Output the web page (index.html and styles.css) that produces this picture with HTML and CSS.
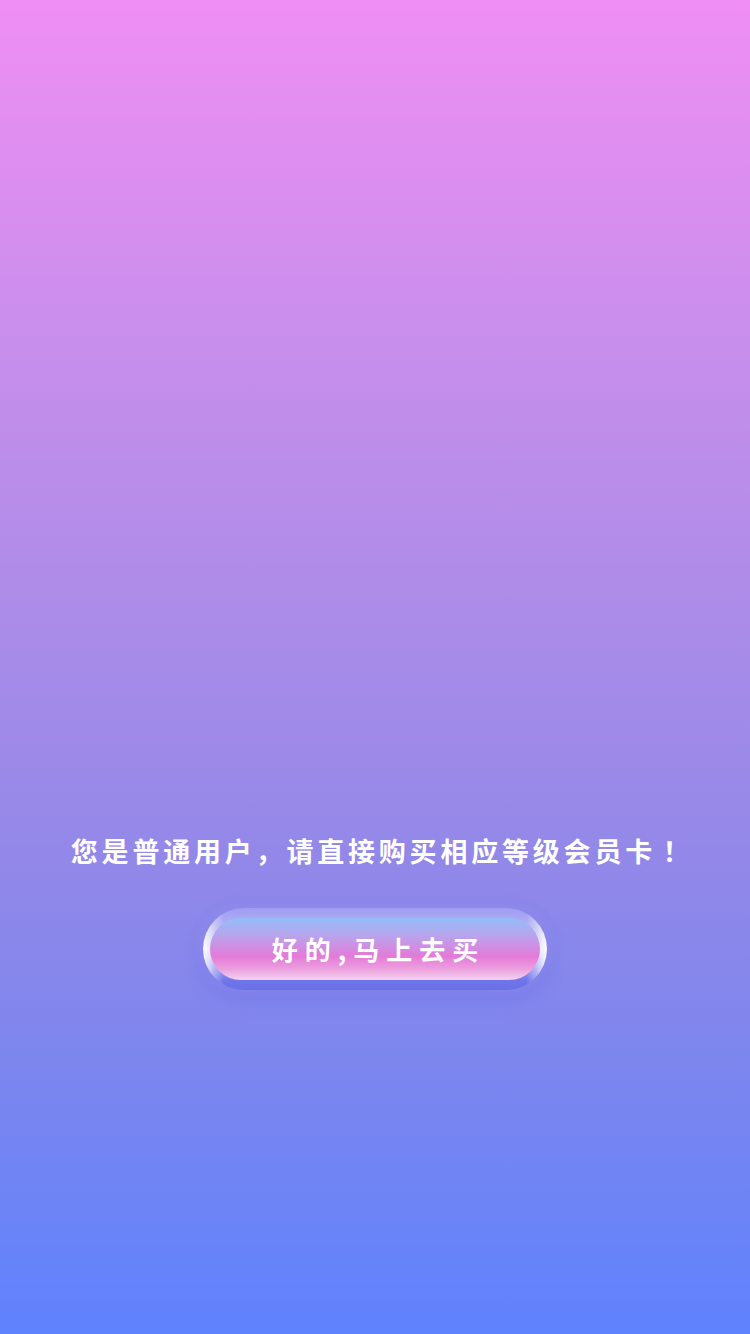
FILE: index.html
```html
<!DOCTYPE html>
<html lang="zh-CN">
<head>
<meta charset="utf-8">
<title>会员提示</title>
<link rel="stylesheet" href="styles.css">
</head>
<body>
<main class="page">
  <p class="notice">您是普通用户，请直接购买相应等级会员卡<span class="fw" lang="zh-TW">！</span></p>
  <div class="btn-frame">
    <button class="btn" type="button">好的,马上去买</button>
  </div>
</main>
</body>
</html>
```

FILE: styles.css
```css
html, body {
  margin: 0;
  padding: 0;
  width: 750px;
  height: 1334px;
}
body {
  background: linear-gradient(180deg, #f08ef4 0%, #c98eec 25%, #ad8ce8 45%, #9488e8 63%, #7c86ee 80%, #5f82fe 100%);
  font-family: "Noto Sans CJK SC", "Noto Sans", sans-serif;
  overflow: hidden;
}
.page {
  display: flex;
  flex-direction: column;
  align-items: center;
  padding-top: 831px;
}
.notice {
  margin: 0;
  color: #ffffff;
  font-size: 27px;
  font-weight: 700;
  line-height: 40px;
  letter-spacing: 3.8px;
  padding-left: 3.8px;
}
.fw {
  display: inline-block;
  width: 27px;
  text-align: center;
  font-family: "Noto Sans CJK TC", "Noto Sans CJK JP", sans-serif;
  letter-spacing: 0;
}
.btn-frame {
  margin-top: 37px;
  width: 330px;
  height: 62px;
  padding: 10px 7px;
  border-radius: 41px;
  background:
    linear-gradient(90deg, rgba(255,255,255,0.9) 0%, rgba(255,255,255,0.35) 3%, rgba(255,255,255,0) 6%, rgba(255,255,255,0) 94%, rgba(255,255,255,0.35) 97%, rgba(255,255,255,0.9) 100%),
    linear-gradient(180deg, #9e9df2 0%, #b8b8f6 30%, #d6d6fa 50%, #9a9cf0 72%, #7076e8 88%, #6a70e6 100%);
  box-shadow:
    0 0 10px 4px rgba(150, 145, 240, 0.45),
    0 8px 18px rgba(95, 100, 230, 0.4);
}
.btn {
  display: block;
  width: 330px;
  height: 62px;
  border: 0;
  border-radius: 31px;
  background: linear-gradient(180deg, #92bdf8 0%, #bba2ec 30%, #e47ad8 62%, #ec9ede 82%, #f3d2f0 100%);
  color: #ffffff;
  font-family: "Noto Sans CJK SC", "Noto Sans", sans-serif;
  font-size: 26px;
  font-weight: 700;
  letter-spacing: 7px;
  padding: 0 0 0 7px;
  line-height: 62px;
  cursor: pointer;
}
```
